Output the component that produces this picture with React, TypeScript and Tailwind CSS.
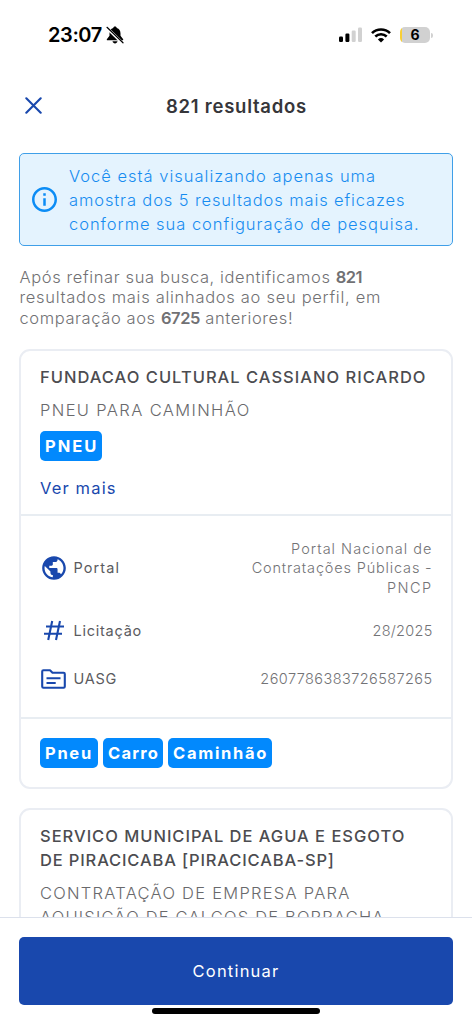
import type { ReactNode } from "react";

function StatusBar() {
  return (
    <div className="flex h-[70px] shrink-0 items-center justify-between pl-12 pr-[39px]">
      <div className="flex items-center gap-[4px] text-black">
        <span className="text-[20px] leading-6 font-semibold tracking-[-0.4px]">23:07</span>
        <svg width="18" height="18" viewBox="0 0 18 18">
          <path d="M9 .6c-1 0-1.700.7-1.800 1.500C4.700 2.800 3.500 5 3.500 7.500v2.300L1 12.900c-.5.700-.2 1.300.5 1.300h15c.7 0 1-.6.5-1.300l-2.500-3.100V7.500c0-2.500-1.200-4.700-3.700-5.400C10.700 1.300 10 .6 9 .6z" fill="#000" />
          <path d="M6.500 15.200h5c-.3 1.400-1.300 2.200-2.500 2.200s-2.200-.8-2.500-2.200z" fill="#000" />
          <path d="M.6 1.600 16.800 17.400" stroke="#fff" strokeWidth="2.900" />
          <path d="M1 1.300 17 16.800" stroke="#000" strokeWidth="1.200" strokeLinecap="round" />
        </svg>
      </div>
      <div className="flex items-center">
        <svg width="25" height="16" viewBox="0 0 25 16">
          <rect x="1" y="9.500" width="4" height="5.500" rx="1.200" fill="#000" />
          <rect x="7.400" y="6.500" width="4" height="8.500" rx="1.200" fill="#000" />
          <rect x="13.700" y="3.500" width="4" height="11.500" rx="1.200" fill="#d1d1d1" />
          <rect x="20" y="0.500" width="4" height="14.500" rx="1.200" fill="#d1d1d1" />
        </svg>
        <svg className="ml-[8px]" width="20" height="15" viewBox="0 0 20 15" fill="none" stroke="#000">
          <path d="M1 5.100a13 13 0 0 1 18 0" strokeWidth="2.700" />
          <path d="M4.300 8.500a8.300 8.300 0 0 1 11.400 0" strokeWidth="2.600" />
          <path d="M10 14.600 6.900 11.500a4.500 4.500 0 0 1 6.200 0z" fill="#000" stroke="none" />
        </svg>
        <div className="ml-[9px] flex h-4 w-[30px] items-center justify-center rounded-[5px] bg-[linear-gradient(to_right,#f8cf35_2px,#d1d1d1_2px)]">
          <span className="text-[14px] leading-4 font-bold text-black">6</span>
        </div>
        <div className="ml-px h-[5px] w-[2px] rounded-r-full bg-[#d1d1d1]" />
      </div>
    </div>
  );
}

function Tag({ children, className }: { children: ReactNode; className: string }) {
  return (
    <span className={`flex h-[30px] items-center rounded-[5px] bg-[#0289fd] pl-[5px] text-[16.500px] font-bold text-white ${className}`}>
      {children}
    </span>
  );
}

function Row({ icon, label, children }: { icon: ReactNode; label: ReactNode; children: ReactNode }) {
  return (
    <div className="flex items-center">
      <span className="flex w-[33.500px] shrink-0 items-center text-[#1948ad]">{icon}</span>
      <span className="text-[14.500px] leading-[19.300px] text-[#5b5b60]">{label}</span>
      <div className="flex flex-1 flex-col items-end text-[14.500px] leading-[19.300px] font-light text-[#737376]">{children}</div>
    </div>
  );
}

export default function App() {
  return (
    <div className="flex h-[1024px] w-[472px] flex-col overflow-hidden bg-white font-['Inter',sans-serif]">
      <StatusBar />
      <header className="flex h-[70px] shrink-0 items-center pl-[25px]">
        <svg width="17" height="17" viewBox="0 0 17 17" fill="none" stroke="#1948ad" strokeWidth="2.100" strokeLinecap="round">
          <path d="M1.300 1.300 15.700 15.700M15.700 1.300 1.300 15.700" />
        </svg>
        <h1 className="ml-[124px] pt-px text-[18.500px] leading-7 font-semibold tracking-[0.740px] whitespace-nowrap text-[#36363a]">821 resultados</h1>
      </header>

      <main className="min-h-0 flex-1 overflow-hidden px-[19px] pt-[13px]">
        <section className="flex h-[93px] w-[434px] items-center rounded-[5px] border border-[#3f9fe8] bg-[#e4f3fe] pl-3">
          <svg className="shrink-0" width="25" height="25" viewBox="2 2 20 20" fill="#0b8cf5">
            <path d="M11 7h2v2h-2zm0 4h2v6h-2zm1-9C6.480 2 2 6.480 2 12s4.480 10 10 10 10-4.480 10-10S17.520 2 12 2zm0 18c-4.410 0-8-3.590-8-8s3.590-8 8-8 8 3.590 8 8-3.590 8-8 8z" />
          </svg>
          <p className="ml-[12px] flex flex-col text-[16.500px] leading-6 font-light whitespace-nowrap text-[#168cf0]">
            <span className="tracking-[1px]">Você está visualizando apenas uma</span>
            <span className="tracking-[0.880px]">amostra dos 5 resultados mais eficazes</span>
            <span className="tracking-[0.960px]">conforme sua configuração de pesquisa.</span>
          </p>
        </section>

        <p className="mt-[20.500px] flex flex-col pl-[0.500px] text-[16.500px] leading-[20.500px] font-light whitespace-pre text-[#717174]">
          <span className="tracking-[0.610px]">Após refinar sua busca, identificamos <b className="font-semibold tracking-[-0.500px]">821</b></span>
          <span className="tracking-[0.700px]">resultados mais alinhados ao seu perfil, em</span>
          <span className="tracking-[0.600px]">comparação aos <b className="font-semibold tracking-[-0.400px]">6725</b> anteriores!</span>
        </p>

        <article className="mt-[21px] flex h-[440px] w-[434px] flex-col rounded-[11px] border-2 border-[#eaedf3]">
          <div className="flex h-[163px] flex-col items-start px-[19px] pt-[13.500px] whitespace-nowrap">
            <h2 className="text-[16.500px] leading-6 font-medium tracking-[1.010px] text-[#4c4c50]">FUNDACAO CULTURAL CASSIANO RICARDO</h2>
            <p className="mt-[9px] text-[16.500px] leading-6 font-light tracking-[1.370px] text-[#69696c]">PNEU PARA CAMINHÃO</p>
            <div className="mt-[9.500px]"><Tag className="w-[62px] tracking-[2px]">PNEU</Tag></div>
            <a className="mt-[15px] text-[16.500px] leading-6 tracking-[1.150px] text-[#1948ad]">Ver mais</a>
          </div>
          <div className="flex h-[205px] flex-col border-y-2 border-[#e8edf2] pl-[19px] pr-[18.500px] pt-[23px]">
            <Row
              icon={
                <svg className="ml-[1px]" width="26" height="26" viewBox="1 1 22 22" fill="currentColor">
                  <path d="M12 2C6.480 2 2 6.480 2 12s4.480 10 10 10 10-4.480 10-10S17.520 2 12 2zm-1 17.930c-3.950-.49-7-3.850-7-7.930 0-.62.080-1.210.210-1.790L9 15v1c0 1.100.9 2 2 2v1.930zm6.900-2.540c-.26-.81-1-1.390-1.900-1.390h-1v-3c0-.55-.45-1-1-1H8v-2h2c.55 0 1-.45 1-1V7h2c1.100 0 2-.9 2-2v-.41c2.930 1.190 5 4.060 5 7.410 0 2.080-.8 3.970-2.100 5.390z" />
                </svg>
              }
              label={<span className="tracking-[1.100px]">Portal</span>}
            >
              <span className="tracking-[1.020px]">Portal Nacional de</span>
              <span className="tracking-[0.830px]">Contratações Públicas -</span>
              <span className="tracking-[1.400px]">PNCP</span>
            </Row>
            <div className="mt-[23px]">
              <Row
                icon={
                  <svg className="ml-[3px]" width="22" height="21" viewBox="0 0 22 21" fill="none" stroke="currentColor" strokeWidth="2.100">
                    <path d="M3 6.500H21M1 13.800H19M9.200 1 5.200 20M17 1l-4 19" />
                  </svg>
                }
                label={<span className="tracking-[0.750px]">Licitação</span>}
              >
                <span className="tracking-[0.260px]">28/2025</span>
              </Row>
            </div>
            <div className="mt-[28px]">
              <Row
                icon={
                  <svg className="ml-[1px]" width="25" height="20" viewBox="0 0 25 20" fill="none" stroke="currentColor" strokeWidth="2.100" strokeLinejoin="round">
                    <path d="M2.400 1.200H9l2.500 2.500h11.100c.7 0 1.200.5 1.200 1.200v12.700c0 .7-.5 1.200-1.200 1.200H2.400c-.7 0-1.200-.5-1.200-1.200V2.400c0-.7.5-1.200 1.200-1.200z" />
                    <path d="M5.500 9.300h14M5.500 14h9.200" />
                  </svg>
                }
                label={<span className="tracking-[0.750px]">UASG</span>}
              >
                <span className="tracking-[0.420px]">2607786383726587265</span>
              </Row>
            </div>
          </div>
          <div className="flex gap-[5px] px-[19px] pt-[19px]">
            <Tag className="w-[58px] tracking-[1.700px]">Pneu</Tag>
            <Tag className="w-[60px] tracking-[1.200px]">Carro</Tag>
            <Tag className="w-[104px] tracking-[1.700px]">Caminhão</Tag>
          </div>
        </article>

        <article className="mt-[19px] flex h-[440px] w-[434px] flex-col rounded-[11px] border-2 border-[#eaedf3] px-[19px] pt-[13.500px] whitespace-nowrap">
          <h2 className="flex flex-col text-[16.500px] leading-6 font-medium text-[#4c4c50]">
            <span className="tracking-[0.980px]">SERVICO MUNICIPAL DE AGUA E ESGOTO</span>
            <span className="tracking-[0.850px]">DE PIRACICABA [PIRACICABA-SP]</span>
          </h2>
          <p className="mt-[9px] flex flex-col text-[16.500px] leading-6 font-light text-[#69696c]">
            <span className="tracking-[1.260px]">CONTRATAÇÃO DE EMPRESA PARA</span>
            <span className="tracking-[1.180px]">AQUISIÇÃO DE CALÇOS DE BORRACHA</span>
          </p>
        </article>
      </main>

      <footer className="flex h-[107px] shrink-0 flex-col items-center border-t border-[#dce1ec] bg-white pt-[19px]">
        <button className="h-[68px] w-[434px] rounded-[5px] bg-[#1948ad] text-[16.500px] tracking-[1.200px] text-white">Continuar</button>
        <div className="mt-[3px] h-[6px] w-[168px] rounded-full bg-black" />
      </footer>
    </div>
  );
}
